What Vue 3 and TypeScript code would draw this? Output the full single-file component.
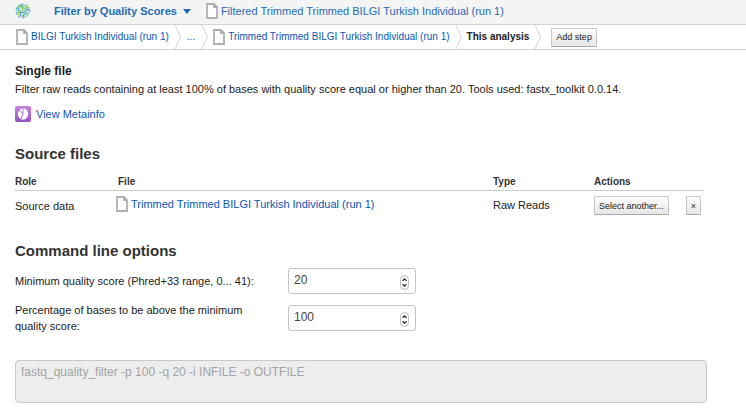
<script setup lang="ts">
import { ref, computed, h } from 'vue'

const quality = ref(20)
const percentage = ref(100)
const command = computed(
  () => `fastq_quality_filter -p ${percentage.value} -q ${quality.value} -i INFILE -o OUTFILE`,
)

const FileIcon = () =>
  h('svg', { width: 12, height: 16, viewBox: '0 0 12 16', fill: '#fff', 'aria-hidden': 'true' }, [
    h('path', { d: 'M1 1H8L11 4V15H1Z', stroke: '#b0b0b0', 'stroke-width': 1.8 }),
    h('path', { d: 'M7.5 1V4.5H11Z', fill: '#aaa', stroke: '#aaa', 'stroke-width': 0.8 }),
  ])

const Chevron = () =>
  h('svg', { width: 8, height: 24, viewBox: '0 0 8 24', fill: 'none', 'aria-hidden': 'true' }, [
    h('path', { d: 'M1 0L6.5 12L1 24', stroke: '#d4d4d4' }),
  ])

function step(target: 'quality' | 'percentage', delta: number) {
  if (target === 'quality') quality.value = Math.min(41, Math.max(0, quality.value + delta))
  else percentage.value = Math.min(100, Math.max(0, percentage.value + delta))
}
</script>

<template>
  <div class="page">
    <header class="topbar">
      <a class="logo" href="#" aria-label="Home">
        <svg width="16" height="16" viewBox="0 0 16 16" fill="none" stroke-linecap="round">
          <circle cx="8" cy="8" r="7" fill="#e3f1e4" />
          <path d="M1 7Q3 2 8 1M5 2Q8 4 12 2M1.5 10Q5 7 3 5" stroke="#4fb4d0" stroke-width="1.2" />
          <path d="M3 4Q7 2 8 5Q6 8 9 7Q12 3 14 5M2 12Q5 10 5 7" stroke="#8cc653" stroke-width="1.1" />
          <path d="M4 14Q6 12 6 9Q9 11 12 6Q14 6 15 8M8 15Q8 11 12 10" stroke="#3b90c4" stroke-width="1.1" />
          <path d="M10 14Q13 13 14 10M7 13Q11 12 13 8M5 5Q7 4 10 5" stroke="#5cc2a4" stroke-width="1" />
          <path d="M9 3Q11 4 13 3M3 8Q4 9 4 11" stroke="#cfdf62" stroke-width="1" />
        </svg>
      </a>
      <button class="app-menu" type="button">
        Filter by Quality Scores
        <svg width="8" height="5" viewBox="0 0 8 5" aria-hidden="true"><path d="M0 0H8L4 5Z" fill="#1f6bb5" /></svg>
      </button>
      <a class="file-link" href="#"><FileIcon />Filtered Trimmed Trimmed BILGI Turkish Individual (run 1)</a>
    </header>

    <nav class="crumbs" aria-label="Analysis steps">
      <a class="file-link first" href="#"><FileIcon />BILGI Turkish Individual (run 1)</a>
      <Chevron />
      <a class="dots" href="#">...</a>
      <Chevron />
      <a class="file-link second" href="#"><FileIcon />Trimmed Trimmed BILGI Turkish Individual (run 1)</a>
      <Chevron />
      <strong>This analysis</strong>
      <Chevron />
      <button class="btn add" type="button">Add step</button>
    </nav>

    <main>
      <h3>Single file</h3>
      <p class="desc">Filter raw reads containing at least 100% of bases with quality score equal or higher than 20. Tools used: fastx_toolkit 0.0.14.</p>
      <a class="meta" href="#">
        <svg width="16" height="16" viewBox="0 0 16 16" aria-hidden="true">
          <defs>
            <linearGradient id="meta-fill" x2="0" y2="1"><stop stop-color="#c384e0" /><stop offset="1" stop-color="#9453c0" /></linearGradient>
          </defs>
          <rect width="16" height="16" rx="2" fill="url(#meta-fill)" />
          <ellipse cx="8" cy="8" rx="5.2" ry="5.8" fill="#fff" />
          <path d="M8 2.2V8L4 4.2M8 8L5.8 13" fill="none" stroke="#a866cd" stroke-width=".9" />
        </svg>
        View Metainfo
      </a>

      <h2>Source files</h2>
      <table>
        <thead>
          <tr><th class="role">Role</th><th class="file-head">File</th><th class="type">Type</th><th class="actions">Actions</th></tr>
        </thead>
        <tbody>
          <tr>
            <td>Source data</td>
            <td><a class="file-link" href="#"><FileIcon />Trimmed Trimmed BILGI Turkish Individual (run 1)</a></td>
            <td class="kind">Raw Reads</td>
            <td>
              <div class="buttons">
                <button class="btn" type="button">Select another...</button>
                <button class="btn remove" type="button" aria-label="Remove">×</button>
              </div>
            </td>
          </tr>
        </tbody>
      </table>

      <h2 class="options-title">Command line options</h2>
      <form class="options" @submit.prevent>
        <label for="quality">Minimum quality score (Phred+33 range, 0... 41):</label>
        <div class="number">
          <input id="quality" v-model.number="quality" type="number" min="0" max="41" />
          <span class="spinner">
            <button type="button" aria-label="Increase quality" @click="step('quality', 1)"><svg width="5" height="3" viewBox="0 0 5 3"><path d="M.5 3L2.5 .8L4.5 3" /></svg></button>
            <button type="button" aria-label="Decrease quality" @click="step('quality', -1)"><svg width="5" height="3" viewBox="0 0 5 3"><path d="M.5 0L2.5 2.2L4.5 0" /></svg></button>
          </span>
        </div>
        <label for="percentage">Percentage of bases to be above the minimum quality score:</label>
        <div class="number">
          <input id="percentage" v-model.number="percentage" type="number" min="0" max="100" />
          <span class="spinner">
            <button type="button" aria-label="Increase percentage" @click="step('percentage', 1)"><svg width="5" height="3" viewBox="0 0 5 3"><path d="M.5 3L2.5 .8L4.5 3" /></svg></button>
            <button type="button" aria-label="Decrease percentage" @click="step('percentage', -1)"><svg width="5" height="3" viewBox="0 0 5 3"><path d="M.5 0L2.5 2.2L4.5 0" /></svg></button>
          </span>
        </div>
      </form>
      <textarea :value="command" aria-label="Command line" disabled></textarea>
    </main>
  </div>
</template>

<style>
body {
  background: #fff;
}
</style>

<style scoped>
.page {
  font: 11px/16px "Liberation Sans", Arial, sans-serif;
  color: #222;
}
.page * {
  box-sizing: border-box;
}
button,
input,
textarea {
  font-family: inherit;
  margin: 0;
}
a {
  color: #0757b8;
  text-decoration: none;
}
svg {
  flex: none;
  display: block;
}
.topbar,
.crumbs {
  display: flex;
  align-items: center;
  height: 25px;
  border-bottom: 1px solid #d2d2d2;
  white-space: nowrap;
}
.topbar {
  background: #f4f4f4;
  padding: 0 15px 2px;
}
.topbar a {
  color: #1f6bb5;
}
.app-menu {
  display: flex;
  align-items: center;
  gap: 6px;
  margin: 0 15px 0 23px;
  padding: 0;
  border: 0;
  background: none;
  color: #1f6bb5;
  font-size: 11px;
  font-weight: bold;
}
.file-link {
  display: inline-flex;
  align-items: center;
  gap: 3px;
}
.crumbs {
  padding-left: 16px;
  font-size: 10px;
}
.first {
  margin-right: 5px;
}
.dots {
  margin: 0 6px 0 5px;
}
.second {
  margin: 0 5px 0 4px;
}
.crumbs strong {
  margin: 0 5px 0 4px;
}
.btn {
  height: 19px;
  padding: 0 4px;
  border: 1px solid #c8c8c8;
  border-bottom-color: #aaa;
  border-radius: 1px;
  background: linear-gradient(#fdfdfd, #e6e6e6);
  color: #222;
  font-size: 9px;
  line-height: 16px;
  white-space: nowrap;
}
.add {
  margin-left: 9px;
}
main {
  padding: 13px 39px 10px 15px;
}
h2,
h3,
p {
  margin: 0;
}
h3 {
  font-size: 12px;
  line-height: 16px;
}
.desc {
  line-height: 20px;
}
.meta {
  display: flex;
  width: fit-content;
  align-items: center;
  gap: 5px;
  margin-top: 7px;
}
h2 {
  margin-top: 22px;
  color: #333;
  font-size: 15px;
  line-height: 20px;
}
table {
  width: calc(100% - 3px);
  margin-top: 10px;
  border-collapse: collapse;
  table-layout: fixed;
}
th {
  padding: 0;
  border-bottom: 1px solid #ccc;
  color: #333;
  font-size: 10px;
  text-align: left;
}
td {
  height: 30px;
  padding: 0;
}
.role {
  width: 101px;
}
.file-head {
  padding-left: 2px;
}
.type {
  width: 101px;
}
.actions {
  width: 110px;
}
.kind {
  padding-bottom: 2px;
}
.buttons {
  display: flex;
  justify-content: space-between;
  padding-right: 3px;
}
.options-title {
  margin-top: 20px;
}
.options {
  display: grid;
  grid-template-columns: 244px 128px;
  column-gap: 29px;
  row-gap: 8px;
  align-items: center;
  margin-top: 7px;
}
.number {
  position: relative;
}
.number input {
  display: block;
  width: 100%;
  height: 26px;
  padding: 0 20px 2px 5px;
  border: 1px solid #c4c4c4;
  border-radius: 3px;
  background: #fff;
  color: #444;
  font-size: 12px;
  appearance: textfield;
}
.number input::-webkit-inner-spin-button {
  display: none;
}
.spinner {
  position: absolute;
  top: 7px;
  right: 7px;
  display: flex;
  flex-direction: column;
  justify-content: center;
  gap: 3px;
  width: 9px;
  height: 15px;
  border: 1px solid #bbb;
  border-radius: 5px;
}
.spinner button {
  display: flex;
  justify-content: center;
  padding: 0;
  border: 0;
  background: none;
}
.spinner path {
  fill: none;
  stroke: #333;
  stroke-width: 1.3;
}
textarea {
  display: block;
  width: 100%;
  height: 43px;
  margin-top: 26px;
  padding: 4px 5px;
  border: 1px solid #c8c8c8;
  border-radius: 4px;
  background: #ededed;
  color: #a3a3a3;
  font-size: 12px;
  line-height: 15px;
  resize: none;
}
</style>
